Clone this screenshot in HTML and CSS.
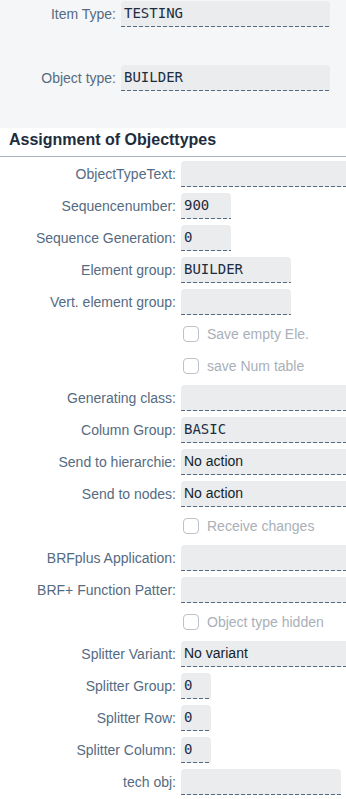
FILE: index.html
```html
<!DOCTYPE html>
<html>
  <head>
    <link rel="stylesheet" href="styles.css">
  </head>
  <body>

    <div class="header">
      <div class="row">
        <label class="lbl">Item Type:</label>
        <div class="field mono w-head">TESTING</div>
      </div>
      <div class="row">
        <label class="lbl">Object type:</label>
        <div class="field mono w-head">BUILDER</div>
      </div>
    </div>

    <h3 class="title">Assignment of Objecttypes</h3>

    <div class="form">
      <label class="lbl">ObjectTypeText:</label>
      <div class="field w-full"></div>

      <label class="lbl">Sequencenumber:</label>
      <div class="field mono w-num">900</div>

      <label class="lbl">Sequence Generation:</label>
      <div class="field mono w-num">0</div>

      <label class="lbl">Element group:</label>
      <div class="field mono w-mid">BUILDER</div>

      <label class="lbl">Vert. element group:</label>
      <div class="field w-mid"></div>

      <span></span>
      <div class="check"><span class="box"></span>Save empty Ele.</div>

      <span></span>
      <div class="check"><span class="box"></span>save Num table</div>

      <label class="lbl">Generating class:</label>
      <div class="field w-full"></div>

      <label class="lbl">Column Group:</label>
      <div class="field mono w-full">BASIC</div>

      <label class="lbl">Send to hierarchie:</label>
      <div class="field w-full">No action</div>

      <label class="lbl">Send to nodes:</label>
      <div class="field w-full">No action</div>

      <span></span>
      <div class="check"><span class="box"></span>Receive changes</div>

      <label class="lbl">BRFplus Application:</label>
      <div class="field w-full"></div>

      <label class="lbl">BRF+ Function Patter:</label>
      <div class="field w-full"></div>

      <span></span>
      <div class="check"><span class="box"></span>Object type hidden</div>

      <label class="lbl">Splitter Variant:</label>
      <div class="field w-full">No variant</div>

      <label class="lbl">Splitter Group:</label>
      <div class="field mono w-tiny">0</div>

      <label class="lbl">Splitter Row:</label>
      <div class="field mono w-tiny">0</div>

      <label class="lbl">Splitter Column:</label>
      <div class="field mono w-tiny">0</div>

      <label class="lbl">tech obj:</label>
      <div class="field w-tech"></div>
    </div>

  </body>
</html>
```

FILE: styles.css
```css
html, body {
  margin: 0;
  overflow: hidden;
  background-color: #ffffff;
  font-family: "Liberation Sans", Arial, sans-serif;
  font-size: 14px;
  color: #1d2d3e;
}
.header {
  background-color: #f5f6f7;
  height: 128px;
  padding-top: 1px;
  box-sizing: border-box;
}
.header .row {
  display: grid;
  grid-template-columns: 116px auto;
  column-gap: 5px;
  margin-bottom: 38px;
}
.lbl {
  text-align: right;
  line-height: 26px;
  color: #556b82;
  white-space: nowrap;
}
.field {
  height: 26px;
  line-height: 25px;
  box-sizing: border-box;
  padding: 0 3px;
  background-color: #eaecee;
  background-image: repeating-linear-gradient(to right, #556b82 0, #556b82 4px, transparent 4px, transparent 6px);
  background-size: 100% 1px;
  background-position: left bottom;
  background-repeat: no-repeat;
  border-radius: 4px 4px 0 0;
  color: #131e29;
  white-space: nowrap;
}
.mono {
  font-family: "DejaVu Sans Mono", "Liberation Mono", monospace;
  color: #1d2d3e;
}
.w-head { width: 209px; }
.w-full { width: 172px; }
.w-num { width: 50px; }
.w-mid { width: 110px; }
.w-tiny { width: 30px; }
.w-tech { width: 160px; }
.title {
  margin: 0;
  padding: 0 9px 4px;
  line-height: 24px;
  font-size: 16px;
  font-weight: bold;
  color: #1d2d3e;
  border-bottom: 1px solid #a9b4be;
}
.form {
  display: grid;
  grid-template-columns: 176px auto;
  column-gap: 5px;
  row-gap: 6px;
  padding-top: 4px;
  justify-items: start;
}
.form .lbl {
  justify-self: end;
}
.check {
  display: flex;
  align-items: center;
  height: 26px;
  color: #a9b0b8;
}
.box {
  width: 16px;
  height: 16px;
  box-sizing: border-box;
  border: 1px solid #bcc3ca;
  border-radius: 4px;
  background-color: #ffffff;
  margin: 0 8px 0 2px;
}
```
